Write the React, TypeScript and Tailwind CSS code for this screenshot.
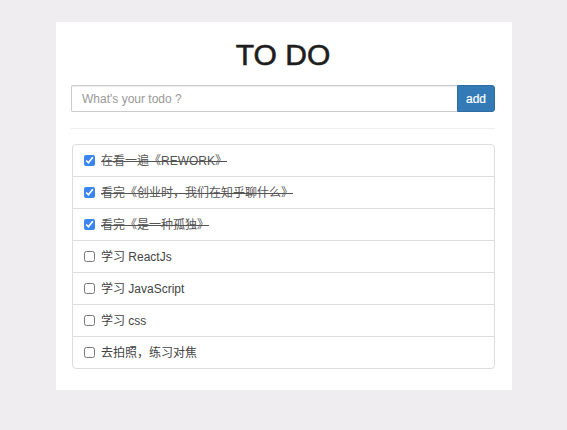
import React from "react";

const todos: { text: string; done: boolean }[] = [
  { text: "在看一遍《REWORK》", done: true },
  { text: "看完《创业时，我们在知乎聊什么》", done: true },
  { text: "看完《是一种孤独》", done: true },
  { text: "学习 ReactJs", done: false },
  { text: "学习 JavaScript", done: false },
  { text: "学习 css", done: false },
  { text: "去拍照，练习对焦", done: false },
];

export default function App() {
  return (
    <div
      className="w-[567px] h-[430px] bg-[#efedf0] pt-[22px]"
      style={{ fontFamily: '"Liberation Sans", Arial, "Noto Sans CJK SC", sans-serif' }}
    >
      <div className="ml-[56px] w-[456px] h-[368px] bg-white pt-[15px] pl-[15px] pr-[17px]">
        <h1 className="text-center text-[30px] leading-[36px] font-medium text-[#1e1e1e] [-webkit-text-stroke:0.6px_#1e1e1e]">
          TO DO
        </h1>
        <div className="mt-[12px] flex h-[27px]">
          <input
            className="flex-1 h-full border border-[#ccc] border-r-0 px-[10px] text-[12px] text-[#555] placeholder:text-[#999] outline-none rounded-l-[2px] shadow-[inset_0_1px_1px_rgba(0,0,0,0.075)]"
            placeholder="What's your todo ?"
          />
          <button className="w-[38px] h-full bg-[#337ab7] border border-[#2e6da4] text-white text-[12px] rounded-r-[3px] [-webkit-text-stroke:0.2px_#fff]">
            add
          </button>
        </div>
        <div className="mt-[16px] h-px bg-[#eee]" />
        <ul className="mt-[15px] ml-px border border-[#ddd] rounded-[4px]">
          {todos.map((t, i) => (
            <li
              key={i}
              className={`flex items-center pl-[11px] text-[12px] ${i > 0 ? "h-[32px] border-t border-[#ddd]" : "h-[31px]"}`}
            >
              <input
                type="checkbox"
                defaultChecked={t.done}
                className="w-[11px] h-[11px] m-0 mr-[6px] accent-[#3a86f0]"
              />
              <span className={t.done ? "line-through text-[#555]" : "text-[#444]"}>{t.text}</span>
            </li>
          ))}
        </ul>
      </div>
    </div>
  );
}
